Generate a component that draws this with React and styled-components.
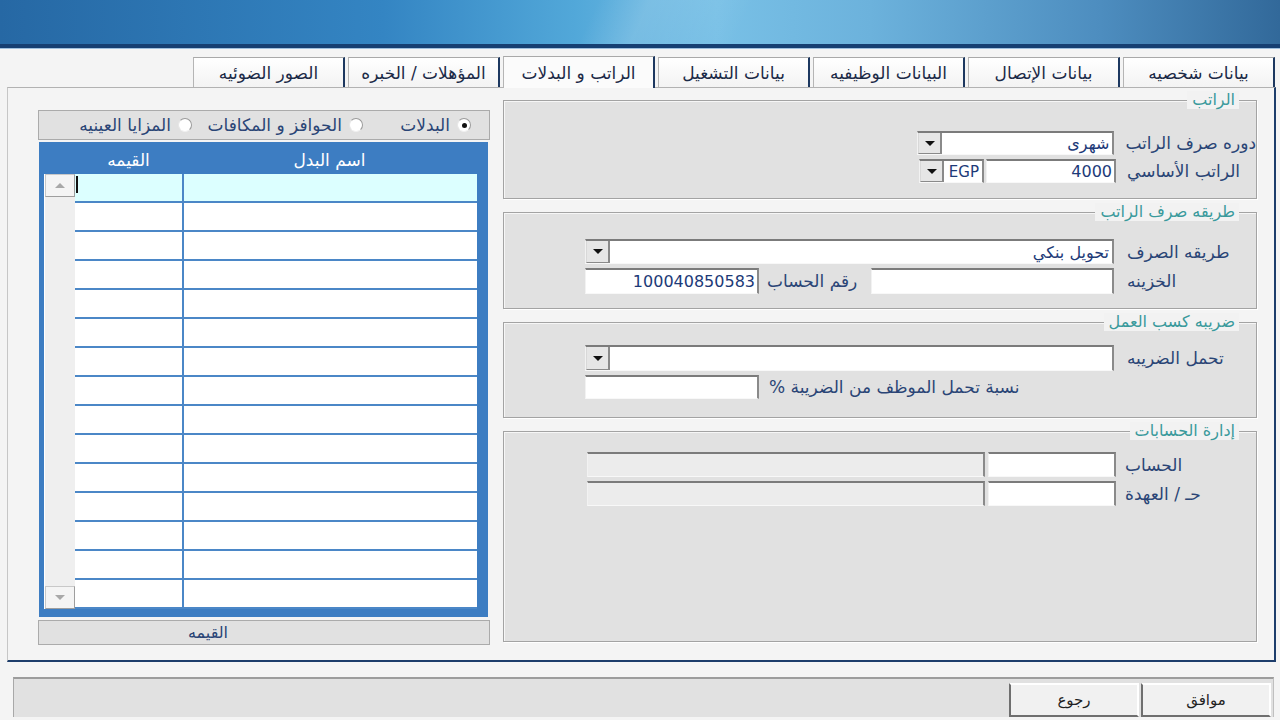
import React from 'react';
import styled, { createGlobalStyle, css } from 'styled-components';

const GlobalStyle = createGlobalStyle`
  html, body {
    margin: 0;
    padding: 0;
    background: #f4f4f4;
  }
  * {
    box-sizing: border-box;
  }
`;

const Page = styled.div`
  width: 1280px;
  height: 720px;
  overflow: hidden;
  background: #f4f4f4;
  direction: rtl;
  font-family: 'DejaVu Sans', Tahoma, sans-serif;
  font-size: 16px;
  color: #2a4576;
`;

const Header = styled.div`
  height: 48px;
  background:
    linear-gradient(115deg, transparent 46%, rgba(255, 255, 255, 0.14) 50%, transparent 58%),
    linear-gradient(90deg, #2668a4 0%, #3485c3 30%, #52a8d9 45%, #78c0e6 56%, #6cb2dc 68%, #4d8dbf 86%, #32699a 100%);
  border-bottom: 4px solid #163f72;
  box-shadow: 0 1px 0 #9fc0de;
`;

const Body = styled.div`
  padding: 8px 4px 0 7px;
`;

const TabRow = styled.div`
  display: flex;
  align-items: flex-end;
  gap: 3px;
  height: 31px;
  padding-right: 1px;
`;

const Tab = styled.div`
  width: 152px;
  height: 30px;
  display: flex;
  align-items: center;
  justify-content: center;
  background: linear-gradient(#ffffff, #f3f3f3);
  border-top: 1px solid #a9a9a9;
  border-left: 1px solid #b5b5b5;
  border-right: 2px solid #1d3860;
  color: #1b2a47;
  font-size: 17px;
  white-space: nowrap;
  ${p => p.$active && css`
    height: 32px;
    margin-bottom: -1px;
    background: #fbfbfb;
    position: relative;
    z-index: 1;
  `}
`;

const Panel = styled.div`
  height: 575px;
  display: flex;
  align-items: flex-start;
  gap: 13px;
  padding: 12px 17px 0 30px;
  border-top: 1px solid #b2b2b2;
  border-left: 1px solid #c6c6c6;
  border-right: 2px solid #1d3d6b;
  border-bottom: 2px solid #1d3d6b;
  background: #f4f4f4;
`;

const RightCol = styled.div`
  width: 755px;
  display: flex;
  flex-direction: column;
  gap: 13px;
`;

const Group = styled.div`
  position: relative;
  height: ${p => p.$h}px;
  padding-top: ${p => p.$top}px;
  background: #e1e1e1;
  border: 1px solid #a3a3a3;
  box-shadow: 1px 1px 0 #ffffff, inset 1px 1px 0 #f6f6f6;
  display: flex;
  flex-direction: column;
  gap: 4px;
`;

const Legend = styled.span`
  position: absolute;
  top: -10px;
  right: 17px;
  padding: 0 4px 0 5px;
  background: #f2f2f2;
  color: #3a9a9c;
  font-size: 16px;
  line-height: 18px;
`;

const Row = styled.div`
  display: flex;
  align-items: center;
  height: ${p => p.$h || 24}px;
`;

const Label = styled.div`
  flex: 0 0 ${p => p.$w}px;
  text-align: left;
  padding-left: ${p => p.$pl ?? 12}px;
  white-space: nowrap;
  font-size: 17px;
  color: #2a4576;
`;

const Field = styled.div`
  width: ${p => p.$w}px;
  height: 100%;
  display: flex;
  align-items: center;
  padding: 0 2px;
  background: ${p => (p.$disabled ? '#ececec' : '#ffffff')};
  border-top: 2px solid #7b7b7b;
  border-right: 2px solid #8a8a8a;
  border-bottom: 1px solid #f8f8f8;
  border-left: 1px solid #f2f2f2;
  color: #1d3a78;
  font-size: 16px;
  white-space: nowrap;
  overflow: hidden;
  margin-left: ${p => p.$ml || 0}px;
`;

const Combo = styled(Field)`
  padding: 0 3px 0 0;
  justify-content: space-between;
`;

const DropBtn = styled.span`
  flex: 0 0 24px;
  height: 100%;
  display: flex;
  align-items: center;
  justify-content: center;
  background: #e6e6e6;
  border-left: 1px solid #d8d8d8;
  border-right: 2px solid #8a8a8a;
  border-bottom: 1px solid #8a8a8a;
  &::after {
    content: '';
    border-left: 5px solid transparent;
    border-right: 5px solid transparent;
    border-top: 5px solid #111;
  }
`;

const Currency = styled.span`
  font-size: 15px;
  color: #1d3a78;
  padding-left: 1px;
`;

const LeftCol = styled.div`
  width: 452px;
  display: flex;
  flex-direction: column;
  margin-top: 10px;
`;

const RadioBar = styled.div`
  height: 30px;
  display: flex;
  align-items: center;
  padding-right: 18px;
  background: #e1e1e1;
  border: 1px solid #ababab;
`;

const RadioItem = styled.label`
  display: flex;
  align-items: center;
  gap: 7px;
  width: ${p => (p.$w ? `${p.$w}px` : 'auto')};
  font-size: 17px;
  white-space: nowrap;
  color: #2a4576;
`;

const RadioDot = styled.span`
  flex: 0 0 14px;
  height: 14px;
  border-radius: 50%;
  background: #ffffff;
  border: 1px solid #9a9a9a;
  border-bottom-color: #f0f0f0;
  border-left-color: #e6e6e6;
  display: flex;
  align-items: center;
  justify-content: center;
  &::after {
    content: '';
    width: 5px;
    height: 5px;
    border-radius: 50%;
    background: ${p => (p.$checked ? '#111' : 'transparent')};
  }
`;

const Grid = styled.div`
  margin: 2px 2px 0 1px;
  height: 475px;
  background: #3d7dc2;
  padding: 3px 11px 8px 5px;
  display: flex;
  flex-direction: column;
`;

const GridHead = styled.div`
  display: flex;
  height: 29px;
  color: #ffffff;
  font-size: 17px;
  padding-left: 31px;
`;

const HeadCell = styled.div`
  width: ${p => p.$w}px;
  display: flex;
  align-items: center;
  justify-content: center;
`;

const GridBody = styled.div`
  display: flex;
  flex: 1;
  min-height: 0;
`;

const Rows = styled.div`
  width: 402px;
  display: flex;
  flex-direction: column;
`;

const GridRow = styled.div`
  display: flex;
  height: 29px;
  border-bottom: 2px solid #4b87c7;
  background: ${p => (p.$current ? '#dcffff' : '#ffffff')};
`;

const Cell = styled.div`
  width: ${p => p.$w}px;
  border-left: ${p => (p.$divider ? '2px solid #4b87c7' : 'none')};
  position: relative;
`;

const Caret = styled.span`
  position: absolute;
  left: 1px;
  top: 2px;
  width: 2px;
  height: 17px;
  background: #111;
`;

const ScrollBar = styled.div`
  width: 31px;
  display: flex;
  flex-direction: column;
  justify-content: space-between;
  background: #efefef;
  border-left: 1px solid #ffffff;
`;

const ScrollBtn = styled.span`
  height: 23px;
  display: flex;
  align-items: center;
  justify-content: center;
  background: #f4f4f4;
  border: 1px solid #c8c8c8;
  border-right-color: #9e9e9e;
  border-bottom-color: #9e9e9e;
  &::after {
    content: '';
    border-left: 5px solid transparent;
    border-right: 5px solid transparent;
    ${p => (p.$down ? 'border-top: 5px solid #a8a8a8;' : 'border-bottom: 5px solid #a8a8a8;')}
  }
`;

const GridFooter = styled.div`
  margin-top: 3px;
  height: 25px;
  display: flex;
  align-items: center;
  justify-content: center;
  padding-right: 112px;
  background: #e1e1e1;
  border: 1px solid #ababab;
  font-size: 16px;
  color: #2a4576;
`;

const StatusBar = styled.div`
  margin: 15px 2px 0 6px;
  height: 40px;
  display: flex;
  align-items: flex-end;
  padding-right: 2px;
  background: #e1e1e1;
  border-top: 2px solid #9c9c9c;
  border-right: 1px solid #c0c0c0;
  border-left: 1px solid #a8a8a8;
`;

const Button = styled.button`
  width: 130px;
  height: 34px;
  margin-left: 2px;
  font-family: 'DejaVu Sans', Tahoma, sans-serif;
  font-size: 15px;
  color: #1f1f1f;
  background: #f1f1f1;
  border: 1px solid #d8d8d8;
  border-top: 2px solid #ffffff;
  border-right: 2px solid #ffffff;
  border-left: 2px solid #6f6f6f;
  border-bottom: 2px solid #6f6f6f;
`;

const tabs = [
  'بيانات شخصيه',
  'بيانات الإتصال',
  'البيانات الوظيفيه',
  'بيانات التشغيل',
  'الراتب و البدلات',
  'المؤهلات / الخبره',
  'الصور الضوئيه',
];

const App = () => {
  const rows = Array.from({ length: 15 }, (_, i) => i);

  return (
    <>
      <GlobalStyle />
      <Page>
        <Header />
        <Body>
          <TabRow>
            {tabs.map((t, i) => (
              <Tab key={t} $active={i === 4}>{t}</Tab>
            ))}
          </TabRow>
          <Panel>
            <RightCol>
              <Group $h={99} $top={30}>
                <Legend>الراتب</Legend>
                <Row>
                  <Label $w={140} $pl={11}>دوره صرف الراتب</Label>
                  <Combo $w={197}>
                    <span>شهرى</span>
                    <DropBtn />
                  </Combo>
                </Row>
                <Row>
                  <Label $w={140} $pl={11}>الراتب الأساسي</Label>
                  <Field $w={130} $ml={2}>4000</Field>
                  <Combo $w={65}>
                    <Currency>EGP</Currency>
                    <DropBtn />
                  </Combo>
                </Row>
              </Group>

              <Group $h={97} $top={26}>
                <Legend>طريقه صرف الراتب</Legend>
                <Row $h={25}>
                  <Label $w={142} $pl={13}>طريقه الصرف</Label>
                  <Combo $w={529}>
                    <span>تحويل بنكي</span>
                    <DropBtn />
                  </Combo>
                </Row>
                <Row $h={26}>
                  <Label $w={142} $pl={13}>الخزينه</Label>
                  <Field $w={243} />
                  <Label $w={112} $pl={8}>رقم الحساب</Label>
                  <Field $w={174}>100040850583</Field>
                </Row>
              </Group>

              <Group $h={96} $top={22}>
                <Legend>ضريبه كسب العمل</Legend>
                <Row $h={26}>
                  <Label $w={142} $pl={13}>تحمل الضريبه</Label>
                  <Combo $w={529}>
                    <span />
                    <DropBtn />
                  </Combo>
                </Row>
                <Row>
                  <Label $w={497} $pl={10}>نسبة تحمل الموظف من الضريبة %</Label>
                  <Field $w={174} />
                </Row>
              </Group>

              <Group $h={211} $top={20}>
                <Legend>إدارة الحسابات</Legend>
                <Row $h={25}>
                  <Label $w={140} $pl={9}>الحساب</Label>
                  <Field $w={128} $ml={3} />
                  <Field $w={398} $disabled />
                </Row>
                <Row $h={25}>
                  <Label $w={140} $pl={9}>حـ / العهدة</Label>
                  <Field $w={128} $ml={3} />
                  <Field $w={398} $disabled />
                </Row>
              </Group>
            </RightCol>

            <LeftCol>
              <RadioBar>
                <RadioItem $w={108}>
                  <RadioDot $checked />
                  البدلات
                </RadioItem>
                <RadioItem $w={171}>
                  <RadioDot />
                  الحوافز و المكافات
                </RadioItem>
                <RadioItem>
                  <RadioDot />
                  المزايا العينيه
                </RadioItem>
              </RadioBar>
              <Grid>
                <GridHead>
                  <HeadCell $w={295}>اسم البدل</HeadCell>
                  <HeadCell $w={107}>القيمه</HeadCell>
                </GridHead>
                <GridBody>
                  <Rows>
                    {rows.map(i => (
                      <GridRow key={i} $current={i === 0}>
                        <Cell $w={295} $divider />
                        <Cell $w={107}>{i === 0 && <Caret />}</Cell>
                      </GridRow>
                    ))}
                  </Rows>
                  <ScrollBar>
                    <ScrollBtn />
                    <ScrollBtn $down />
                  </ScrollBar>
                </GridBody>
              </Grid>
              <GridFooter>القيمه</GridFooter>
            </LeftCol>
          </Panel>
          <StatusBar>
            <Button>موافق</Button>
            <Button>رجوع</Button>
          </StatusBar>
        </Body>
      </Page>
    </>
  );
};

export default App;
